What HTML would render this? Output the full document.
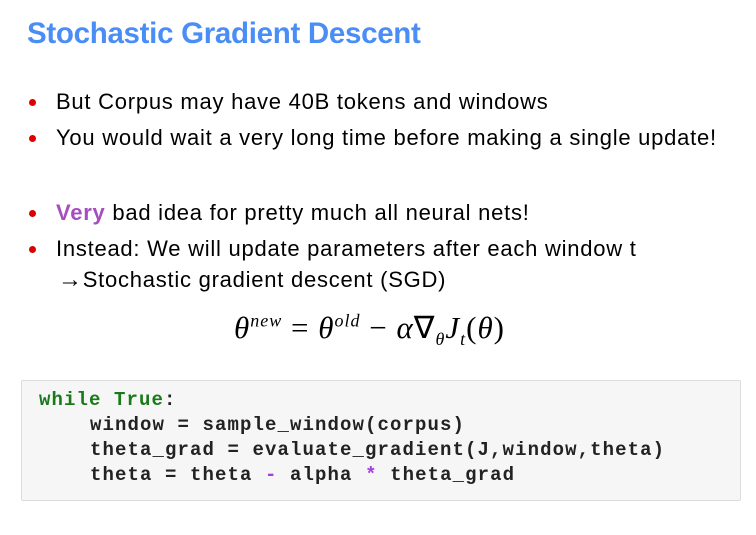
<html><head><style>
body{margin:0;width:756px;height:535px;background:#fff;position:relative;overflow:hidden;font-family:"Liberation Sans",sans-serif}
.a{position:absolute;white-space:nowrap}
.t{left:27px;top:17px;font-size:29.5px;font-weight:bold;color:#4a8ef5;letter-spacing:-0.3px}
.b{font-size:22px;color:#000;left:56px;letter-spacing:0.75px}
.d{position:absolute;left:29px;width:7px;height:7px;border-radius:50%;background:#d00}
.code{position:absolute;left:21px;top:380px;width:718px;height:119px;background:#f6f6f6;border:1px solid #ddd;border-radius:2px}
.c{font-family:"Liberation Mono",monospace;font-size:19px;letter-spacing:1.1px;font-weight:bold;color:#222;left:39px}
</style></head><body>
<div class="a t">Stochastic Gradient Descent</div>
<div class="d" style="top:99px"></div><div class="a b" style="top:89px">But Corpus may have 40B tokens and windows</div>
<div class="d" style="top:135px"></div><div class="a b" style="top:125px">You would wait a very long time before making a single update!</div>
<div class="d" style="top:210px"></div><div class="a b" style="top:200px"><b style="color:#a64dbf">Very</b> bad idea for pretty much all neural nets!</div>
<div class="d" style="top:246px"></div><div class="a b" style="top:236px">Instead: We will update parameters after each window t</div>
<div class="a b" style="top:266px;left:58px"><span style="font-size:24px;font-weight:bold">→</span>Stochastic gradient descent (SGD)</div>
<div class="a" style="left:234px;top:310px;font-family:'Liberation Serif',serif;font-size:31px;font-style:italic;letter-spacing:1px">θ<sup style="font-size:18px">new</sup> <span style="font-style:normal">=</span> θ<sup style="font-size:18px">old</sup> <span style="font-style:normal">−</span> α<span style="font-style:normal">∇</span><sub style="font-size:18px">θ</sub>J<sub style="font-size:18px">t</sub><span style="font-style:normal">(</span>θ<span style="font-style:normal">)</span></div>
<div class="code"></div>
<div class="a c" style="top:389px"><span style="color:#1a7a1a">while True</span>:</div>
<div class="a c" style="top:414px;left:90px">window = sample_window(corpus)</div>
<div class="a c" style="top:439px;left:90px">theta_grad = evaluate_gradient(J,window,theta)</div>
<div class="a c" style="top:464px;left:90px">theta = theta <span style="color:#a040e0">-</span> alpha <span style="color:#a040e0">*</span> theta_grad</div>
</body></html>
